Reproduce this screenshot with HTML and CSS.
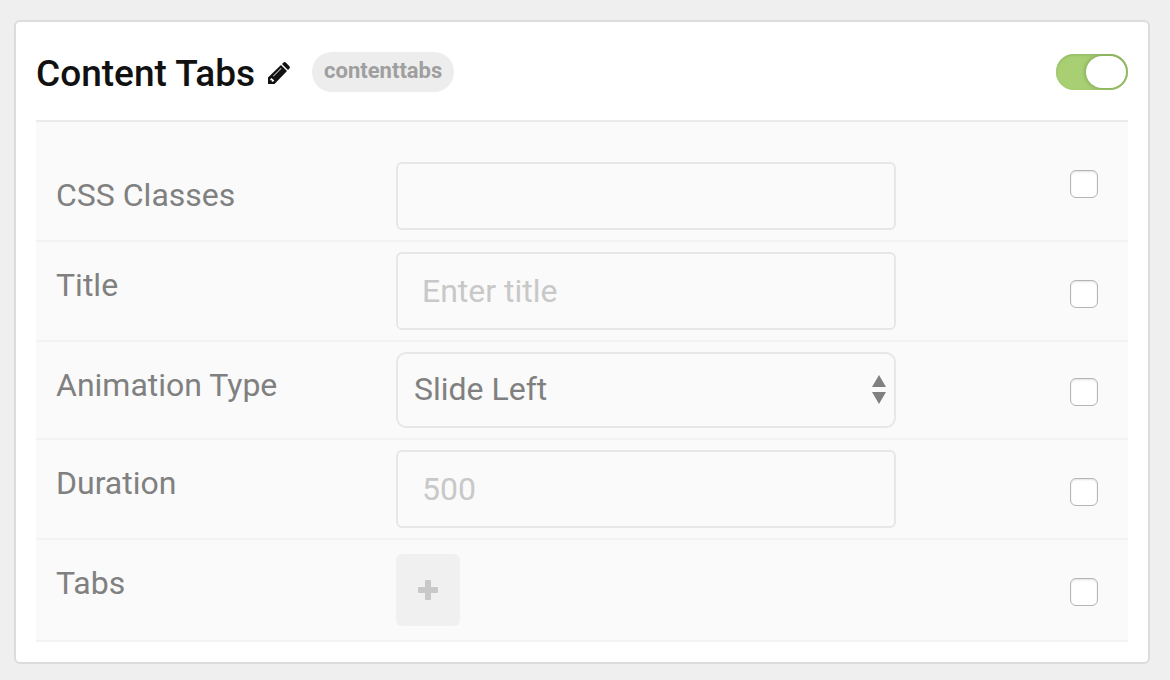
FILE: index.html
```html
<!DOCTYPE html>
<html lang="en">
<head>
<meta charset="utf-8">
<title>Content Tabs</title>
<link rel="stylesheet" href="styles.css">
</head>
<body>
<main class="card">
  <header class="card-header">
    <h1 class="card-title">Content Tabs</h1>
    <button class="edit" type="button" aria-label="Edit title">
      <svg class="edit-icon" viewBox="0 0 22 22" aria-hidden="true">
        <path fill="#111" fill-rule="evenodd" d="M0 22V15.500L13 3L19 9L6.500 22ZM2.200 17.200V18.200H3.800V19.800H5L6.300 18.500L3.500 15.900ZM5 14L13 6L13.500 6.500L5.500 14.500Z"/>
        <path fill="#111" d="M14 2L15.500.6Q16.600-.4 17.800.6L21.400 4.200Q22.500 5.400 21.400 6.500L20 8Z"/>
      </svg>
    </button>
    <span class="tag">contenttabs</span>
    <input class="switch" type="checkbox" role="switch" aria-label="Enable Content Tabs" checked>
  </header>
  <form class="settings">
    <div class="row row-first">
      <label class="label" for="css">CSS Classes</label>
      <input class="field field-short" id="css" type="text">
      <input class="check" type="checkbox" aria-label="Override CSS Classes">
    </div>
    <div class="row">
      <label class="label" for="title">Title</label>
      <input class="field" id="title" type="text" placeholder="Enter title">
      <input class="check" type="checkbox" aria-label="Override Title">
    </div>
    <div class="row">
      <label class="label" for="animation">Animation Type</label>
      <div class="select-wrap">
        <select class="select" id="animation"><option>Slide Left</option></select>
        <svg class="arrows" viewBox="0 0 14 30" aria-hidden="true"><path fill="#808080" d="M7 0L14 12H0ZM0 17H14L7 29Z"/></svg>
      </div>
      <input class="check check-select" type="checkbox" aria-label="Override Animation Type">
    </div>
    <div class="row">
      <label class="label" for="duration">Duration</label>
      <input class="field" id="duration" type="text" placeholder="500">
      <input class="check" type="checkbox" aria-label="Override Duration">
    </div>
    <div class="row row-last">
      <label class="label" for="add">Tabs</label>
      <button class="add" id="add" type="button" aria-label="Add tab">
        <svg class="plus" viewBox="0 0 20 20" aria-hidden="true"><path fill="#c8c8c8" d="M8 0H12Q13 0 13 1V7H19Q20 7 20 8V12Q20 13 19 13H13V19Q13 20 12 20H8Q7 20 7 19V13H1Q0 13 0 12V8Q0 7 1 7H7V1Q7 0 8 0Z"/></svg>
      </button>
      <input class="check" type="checkbox" aria-label="Override Tabs">
    </div>
  </form>
</main>
</body>
</html>
```
FILE: styles.css
```css
* { box-sizing: border-box; }
body {
  margin: 0;
  padding: 20px 20px 16px 14px;
  background: #efefef;
  color: #808080;
  font-family: Roboto, sans-serif;
  font-size: 32px;
}
input, select, button { margin: 0; font: inherit; color: inherit; }
.card {
  padding: 0 20px 20px;
  border: 2px solid #dcdcdc;
  border-radius: 6px;
  background: #fff;
}
.card-header {
  display: flex;
  align-items: center;
  height: 100px;
  padding-top: 2px;
  border-bottom: 2px solid #ebebeb;
}
.card-title {
  margin: 0;
  padding-top: 4px;
  color: #111;
  font-size: 37px;
  font-weight: 500;
  line-height: 44px;
}
.edit {
  display: flex;
  margin-left: 13px;
  padding: 2px 0 0;
  border: 0;
  background: none;
}
.edit-icon { width: 22px; height: 22px; overflow: visible; }
.tag {
  margin-left: 22px;
  padding: 0 12px 2px;
  border-radius: 20px;
  background: #ededed;
  color: #9f9f9f;
  font-size: 22px;
  font-weight: 700;
  line-height: 38px;
}
.switch {
  appearance: none;
  overflow: hidden;
  width: 72px;
  height: 36px;
  margin-left: auto;
  border-radius: 18px;
  background: #a8d073;
  box-shadow: inset 0 1px 3px #8fb664;
}
.switch::before {
  content: "";
  display: block;
  width: 40px;
  height: 32px;
  margin: 2px 2px 2px 30px;
  border-radius: 16px;
  background: #fff;
  box-shadow: 0 0 4px 1px #82a65b;
}
.settings { background: #fafafa; }
.row {
  display: grid;
  grid-template-columns: 340px 500px 1fr;
  align-items: start;
  padding: 10px 30px 10px 20px;
  border-bottom: 2px solid #f3f3f3;
}
.row-first { padding-top: 40px; }
.row-last { padding: 14px 30px 14px 20px; }
.label { padding-top: 13px; line-height: 40px; }
.row-last .label { padding-top: 9px; }
.field, .select {
  width: 100%;
  height: 78px;
  border: 2px solid #e7e7e7;
  border-radius: 6px;
  background: #fafafa;
}
.field { padding: 0 24px; }
.field-short { height: 68px; }
.field::placeholder { color: #c8c8c8; opacity: 1; }
.select-wrap { position: relative; display: flex; }
.select {
  appearance: none;
  height: 76px;
  padding: 0 36px 2px 16px;
  border-radius: 10px;
}
.arrows {
  position: absolute;
  top: 23px;
  right: 10px;
  width: 14px;
  height: 30px;
  pointer-events: none;
}
.add {
  display: flex;
  align-items: center;
  justify-content: center;
  width: 64px;
  height: 72px;
  padding: 0;
  border: 0;
  border-radius: 6px;
  background: #f0f0f0;
}
.plus { width: 20px; height: 20px; }
.check {
  appearance: none;
  justify-self: end;
  width: 28px;
  height: 28px;
  margin-top: 28px;
  border: 1px solid #b4b4b4;
  border-radius: 6px;
  background: #fff;
  box-shadow: inset 0 1px 2px #e2e2e2;
}
.row-first .check { margin-top: 8px; }
.row-last .check { margin-top: 24px; }
.check-select { margin-top: 26px; }
```
